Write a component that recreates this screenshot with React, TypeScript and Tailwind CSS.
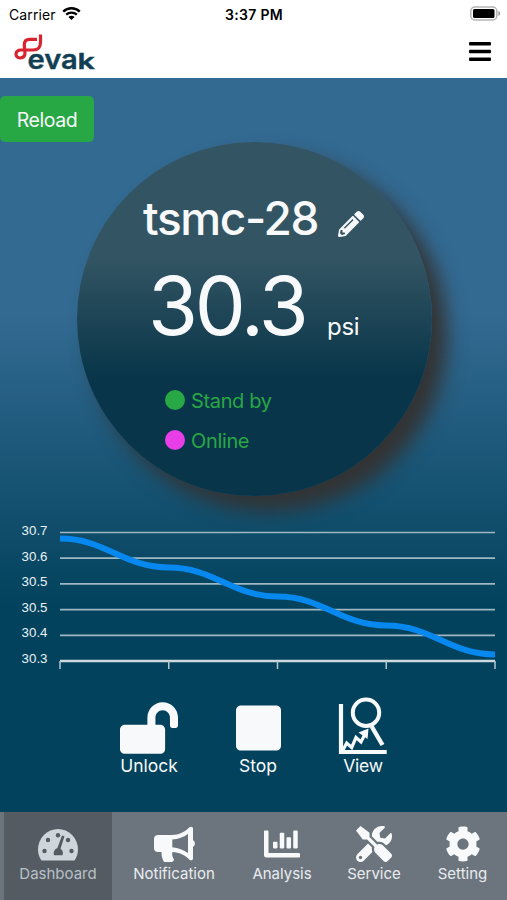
import type { ComponentType } from "react";
import {
  FaBars,
  FaChartBar,
  FaCog,
  FaLockOpen,
  FaPencilAlt,
  FaStop,
  FaTools,
} from "react-icons/fa";

const TICKS = ["30.7", "30.6", "30.5", "30.5", "30.4", "30.3"];

const POINTS = [
  [60, 18.5],
  [168.75, 47.5],
  [277.5, 76.5],
  [386.25, 105.5],
  [495, 134.5],
];

interface Tab {
  icon: ComponentType<{ className?: string }>;
  label: string;
  tab: string;
  size: string;
  active?: boolean;
}

const TABS: Tab[] = [
  { icon: GaugeIcon, label: "Dashboard", tab: "w-[108px]", size: "w-10", active: true },
  { icon: HornIcon, label: "Notification", tab: "w-[124px]", size: "w-[41px]" },
  { icon: FaChartBar, label: "Analysis", tab: "w-[92px]", size: "w-9" },
  { icon: FaTools, label: "Service", tab: "w-[92px]", size: "w-9" },
  { icon: FaCog, label: "Setting", tab: "w-[85px]", size: "w-9" },
];

export default function App() {
  return (
    <div className="flex h-[900px] w-[507px] flex-col overflow-hidden bg-white font-['Inter',sans-serif]">
      <StatusBar />
      <header className="flex h-[51px] items-start justify-between pl-3 pr-[15px]">
        <Logo />
        <button aria-label="Menu">
          <FaBars className="mt-3 h-[25px] w-6 text-black" />
        </button>
      </header>

      <main className="flex h-[734px] flex-col bg-[linear-gradient(180deg,#336a92_0px,#336a92_235px,#02425c_530px)] pt-[18px]">
        <button className="h-[46px] w-[94px] self-start rounded-[5px] bg-[#28a745] pt-[3px] text-[19.5px] tracking-[-0.4px] text-[#f8f9fa]">
          Reload
        </button>
        <Gauge />
        <Chart />
        <div className="mt-4 flex text-[17.5px] leading-6 text-[#f8f9fa]">
          <button className="ml-[109px] flex w-20 flex-col items-center">
            <FaLockOpen className="mt-[6px] h-[52px] w-[58px]" />
            <span>Unlock</span>
          </button>
          <button className="ml-[29px] flex w-20 flex-col items-center">
            <FaStop className="mt-[6px] h-[52px] w-[45px]" />
            <span>Stop</span>
          </button>
          <button className="ml-[25px] flex w-20 flex-col items-center">
            <ViewIcon />
            <span className="tracking-[-0.3px]">View</span>
          </button>
        </div>
      </main>

      <nav className="flex h-[88px] bg-[#6c757d] pl-1">
        {TABS.map((t) => (
          <button
            key={t.label}
            className={`flex flex-col items-center pt-[14px] text-[15px] leading-[22px] ${t.tab} ${
              t.active ? "bg-[#545b62] text-[#ced5db]" : "text-[#f8f9fa]"
            }`}
          >
            <t.icon className={`h-9 ${t.size}`} />
            <span className={`mt-px ${t.active ? "text-[#b9c0c7]" : "text-[#e9ecef]"}`}>{t.label}</span>
          </button>
        ))}
      </nav>
    </div>
  );
}

function StatusBar() {
  return (
    <div className="flex h-[27px] items-center pt-px text-[14px] text-black">
      <div className="flex w-[203px] items-center gap-[6px] pl-[9px]">
        <span className="w-[47px] tracking-[0.1px]">Carrier</span>
        <svg className="-mt-0.5" width="19" height="15" viewBox="0 0 20 15" fill="none" stroke="black" strokeWidth="2.5">
          <path d="M1.3 5.6C6.2 .8 13.8 .8 18.7 5.6" />
          <path d="M4.4 8.8C7.6 5.8 12.4 5.8 15.6 8.8" />
          <path d="M6.8 11.2C8.6 9.4 11.4 9.4 13.2 11.2L10 14.4Z" fill="black" stroke="none" />
        </svg>
      </div>
      <span className="w-[101px] pl-px text-center text-[14px] font-semibold tracking-[0.3px]">3:37 PM</span>
      <svg className="-mt-px ml-[166px]" width="31" height="15" viewBox="0 0 31 15">
        <rect x="0.8" y="1" width="26" height="13" rx="4" fill="white" stroke="#b5b5b5" strokeWidth="1.5" />
        <rect x="3" y="3" width="21.5" height="9" rx="1.5" fill="black" />
        <path d="M28.3 5v5c2.6-1 2.6-4 0-5Z" fill="#a0a0a0" />
      </svg>
    </div>
  );
}

function Logo() {
  return (
    <svg width="86" height="48" viewBox="0 0 86 48">
      <path
        d="M28.500 7.500V15c0 5.500-2 8-7.500 8H9c-6.500 0-6.500 8-1 8 7.500 0 4.300-8 4.300-13 0-4 2-5.700 5.200-5.700H25"
        fill="none"
        stroke="#d9232e"
        strokeWidth="3.200"
      />
      <g fill="#123f54" stroke="#123f54" strokeWidth="0.4" fontWeight="600">
        <text transform="translate(15.500 42.300) scale(1.080 1)" fontSize="27">
          eva
        </text>
        <text transform="translate(65.500 42.300) scale(1.450 1)" fontSize="21">
          k
        </text>
      </g>
    </svg>
  );
}

function Gauge() {
  return (
    <section className="ml-[77px] flex h-[354px] w-[355px] flex-col rounded-full bg-[linear-gradient(180deg,#335563_0px,#335563_115px,#083549_235px)] text-[#f8f9fa] shadow-[15px_15px_20px_#333]">
      <div className="mt-[46px] flex h-[60px] items-center pl-[66px]">
        <h1 className="w-[195px] text-[46px] font-medium leading-none tracking-[-1.35px]">tsmc-28</h1>
        <FaPencilAlt className="mt-3 size-[26px]" />
      </div>
      <div className="mt-[10px] flex h-[96px] items-baseline pl-[71px] leading-[96px]">
        <span className="w-[179px] text-[81px] tracking-[-3.2px]">30.3</span>
        <span className="text-[24px] tracking-[-0.3px]">psi</span>
      </div>
      <div className="mt-[26px] flex h-10 items-center gap-[6px] pl-[88px] text-[20px] tracking-[-0.35px] text-[#28a745]">
        <span className="size-[20px] rounded-full bg-[#28a745]" />
        <span className="mt-0.5">Stand by</span>
      </div>
      <div className="flex h-10 items-center gap-[6px] pl-[88px] text-[20px] tracking-[-0.35px] text-[#28a745]">
        <span className="size-[20px] rounded-full bg-[#e83ee8]" />
        <span className="mt-0.5">Online</span>
      </div>
    </section>
  );
}

function Chart() {
  // horizontal tangents at every point
  const line = POINTS.map(([x, y], i) => {
    if (i === 0) return `M${x} ${y}`;
    const [px, py] = POINTS[i - 1];
    const c = (x - px) * 0.42;
    return `C${px + c} ${py} ${x - c} ${y} ${x} ${y}`;
  }).join(" ");

  return (
    <svg className="mt-6 shrink-0" width="507" height="160" viewBox="0 0 507 160">
      {TICKS.map((tick, i) => (
        <g key={i}>
          <text x="47.5" y={15 + i * 25.6} textAnchor="end" fontSize="13.3" fill="#e9f2f5" className="font-['Liberation_Sans',sans-serif]">
            {tick}
          </text>
          <path
            d={`M60 ${12.5 + i * 25.7}H495`}
            stroke={i === 5 ? "#ccd9de" : "#9fb8c4"}
            strokeWidth={i === 5 ? 2.5 : 1.7}
          />
        </g>
      ))}
      {POINTS.map(([x]) => (
        <path key={x} d={`M${x} 141v8`} stroke="#b3c6ce" strokeWidth="1.5" />
      ))}
      <path d={line} fill="none" stroke="#0788ee" strokeWidth="6" />
    </svg>
  );
}

function ViewIcon() {
  return (
    <svg className="h-[58px] w-[50px]" viewBox="0 0 50 58" fill="none" stroke="#f8f9fa">
      <path d="M3 8v48h45.700" strokeWidth="4.200" />
      <circle cx="28" cy="16.700" r="13.200" strokeWidth="4" />
      <path d="m33.700 30.500 10.800 18.500" strokeWidth="4.400" />
      <path d="m5 54 3.700-7 5 4.500 4.300-10 5 4.500 4-8" strokeWidth="3.200" />
      <path d="m30.500 32.500-1 10.500-9-6.500Z" fill="#f8f9fa" stroke="none" />
    </svg>
  );
}

function GaugeIcon({ className }: { className?: string }) {
  return (
    <svg className={className} viewBox="0 0 40 36">
      <path d="M3.500 34.400C1.200 31.500 0 27.500 0 23.500a20 20.500 0 0 1 40 0c0 4-1.200 8-3.500 10.900Z" fill="currentColor" />
      <g fill="#545b62">
        <circle cx="20" cy="9.300" r="2.200" />
        <circle cx="10" cy="14" r="2.200" />
        <circle cx="30" cy="14" r="2.200" />
        <circle cx="6.500" cy="25" r="2.200" />
        <circle cx="33.500" cy="25" r="2.200" />
        <path d="M16 29.200c-.8-3 .5-6.400 3.300-7L24 9.500l2.500.8-4 12.500c2.300 1.300 2.900 4 2 6.400Z" />
      </g>
    </svg>
  );
}

function HornIcon({ className }: { className?: string }) {
  return (
    <svg className={className} viewBox="0 0 41 36" fill="currentColor">
      <path
        fillRule="evenodd"
        d="M4 9h14C25 9 31 6 35.300 1.300 36.800 0 39 .8 39 2.500v11.700c2.500 1.200 2.500 5.400 0 6.600v11.700c0 1.700-2 2.500-3.500 1.200C31 29 25 26.200 18.500 26c-.8 2.500-.2 4.500 1 6.500 1 1.800-.2 3.500-2 3.500h-6c-1.200 0-2-.6-2.300-1.600C8 31.500 7.300 29 7.500 26H4c-2.500 0-4-1.500-4-4v-9c0-2.500 1.500-4 4-4Zm14.300 4.600v7.600c6 .5 11.500 2.800 15.700 5.900V8C29.500 11.200 24.300 13.200 18.300 13.600Z"
      />
    </svg>
  );
}
